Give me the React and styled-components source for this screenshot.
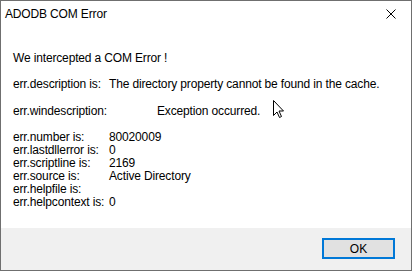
import React from "react";
import styled, { createGlobalStyle } from "styled-components";

const GlobalStyle = createGlobalStyle`
  html, body {
    margin: 0;
    padding: 0;
    background: #ffffff;
  }
  body {
    font-family: "Segoe UI", "Liberation Sans", Arial, sans-serif;
    font-size: 12px;
    letter-spacing: -0.15px;
    color: #000000;
  }
`;

const Window = styled.div`
  position: relative;
  box-sizing: border-box;
  width: 412px;
  height: 271px;
  border: 1px solid #6f6f6f;
  display: flex;
  flex-direction: column;
  background: #ffffff;
`;

const TitleBar = styled.div`
  height: 29px;
  display: flex;
  align-items: center;
  justify-content: space-between;
  padding-left: 4px;
  flex-shrink: 0;
`;

const Title = styled.span`
  font-size: 12px;
  line-height: 16px;
  margin-top: -4px;
`;

const CloseButton = styled.div`
  width: 46px;
  height: 29px;
  display: flex;
  align-items: center;
  justify-content: center;
  margin-top: -3px;
  margin-right: -3px;
`;

const Body = styled.div`
  flex: 1;
  padding: 22px 0 0 12px;
  line-height: 13px;
`;

const Line = styled.div`
  height: 13px;
  margin-top: ${(p) => p.$gap || 0}px;
  white-space: nowrap;
  display: flex;
`;

const Label = styled.span`
  display: inline-block;
  width: ${(p) => p.$width}px;
  flex-shrink: 0;
`;

const Footer = styled.div`
  height: 42px;
  background: #f0f0f0;
  display: flex;
  justify-content: flex-end;
  align-items: flex-start;
  padding: 10px 16px 0 0;
  box-sizing: border-box;
  flex-shrink: 0;
`;

const OkButton = styled.button`
  width: 73px;
  height: 21px;
  box-sizing: border-box;
  border: 2px solid #0078d7;
  background: #e1e1e1;
  font-family: inherit;
  font-size: 12px;
  color: #000000;
  padding: 0;
  line-height: 16px;
`;

const Cursor = styled.svg`
  position: absolute;
  left: 272px;
  top: 99px;
`;

const rows = [
  ["err.number is:", "80020009"],
  ["err.lastdllerror is:", "0"],
  ["err.scriptline is:", "2169"],
  ["err.source is:", "Active Directory"],
  ["err.helpfile is:", ""],
  ["err.helpcontext is:", "0"],
];

export default function App() {
  return (
    <>
      <GlobalStyle />
      <Window>
        <TitleBar>
          <Title>ADODB COM Error</Title>
          <CloseButton>
            <svg width="10" height="10" viewBox="0 0 10 10">
              <path d="M0.5 0.5 L9.5 9.5 M9.5 0.5 L0.5 9.5" stroke="#000" strokeWidth="1" fill="none" />
            </svg>
          </CloseButton>
        </TitleBar>
        <Body>
          <Line>We intercepted a COM Error !</Line>
          <Line $gap={13}>
            <Label $width={96}>err.description is:</Label>
            <span>The directory property cannot be found in the cache.</span>
          </Line>
          <Line $gap={14}>
            <Label $width={144}>err.windescription:</Label>
            <span>Exception occurred.</span>
          </Line>
          <Line $gap={13}>
            <Label $width={96}>{rows[0][0]}</Label>
            <span>{rows[0][1]}</span>
          </Line>
          {rows.slice(1).map(([k, v]) => (
            <Line key={k}>
              <Label $width={96}>{k}</Label>
              <span>{v}</span>
            </Line>
          ))}
        </Body>
        <Footer>
          <OkButton>OK</OkButton>
        </Footer>
        <Cursor width="12" height="19" viewBox="0 0 12 19">
          <path
            d="M0.5 0.5 L0.5 15.5 L4 12 L6.5 17.5 L8.5 16.5 L6 11 L10.5 11 Z"
            fill="#fff"
            stroke="#000"
            strokeWidth="1"
            strokeLinejoin="miter"
          />
        </Cursor>
      </Window>
    </>
  );
}
